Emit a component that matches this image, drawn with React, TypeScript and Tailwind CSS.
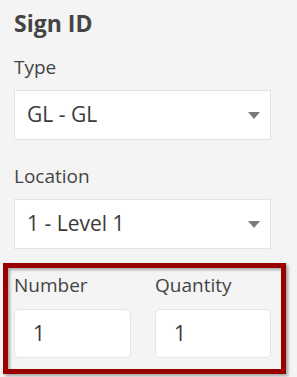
import React from "react";

function SelectBox({ value }: { value: string }) {
  return (
    <div className="flex h-[50px] w-[257px] items-center justify-between border border-[#e3e3e3] bg-white pl-[12px] pr-[10px]">
      <span className="text-[21px] text-[#3a3a3a]">{value}</span>
      <svg width="12" height="7" viewBox="0 0 12 7">
        <path d="M0 0h12L6 7z" fill="#7a7a7a" />
      </svg>
    </div>
  );
}

function Field({ label, value }: { label: string; value: string }) {
  return (
    <div className="flex flex-col">
      <span className="text-[19px] leading-[24px] text-[#444]">{label}</span>
      <div className="mt-[12px] flex h-[49px] items-center rounded-[5px] border border-[#e6e6e6] bg-white pl-[18px] text-[21px] text-[#3a3a3a]">
        {value}
      </div>
    </div>
  );
}

export default function App() {
  return (
    <div
      className="relative h-[377px] w-[297px] overflow-hidden bg-[#f4f4f4] px-[14px] pt-[9px]"
      style={{ fontFamily: "'Open Sans', 'Liberation Sans', sans-serif" }}
    >
      <h2 className="text-[23px] font-bold leading-[28px] text-[#444]">Sign ID</h2>

      <div className="mt-[18px] text-[19px] leading-[24px] text-[#444]">Type</div>
      <div className="mt-[11px]">
        <SelectBox value="GL - GL" />
      </div>

      <div className="mt-[24px] text-[19px] leading-[24px] text-[#444]">Location</div>
      <div className="mt-[11px]">
        <SelectBox value="1 - Level 1" />
      </div>

      <div className="mt-[24px] grid w-[257px] grid-cols-[117px_116px] gap-x-[24px]">
        <Field label="Number" value="1" />
        <Field label="Quantity" value="1" />
      </div>

      <div className="pointer-events-none absolute left-[3px] top-[263px] h-[111px] w-[283px] border-[5px] border-[#990000] shadow-[2px_2px_3px_rgba(0,0,0,0.35),inset_2px_2px_3px_rgba(0,0,0,0.3)]" />
    </div>
  );
}
